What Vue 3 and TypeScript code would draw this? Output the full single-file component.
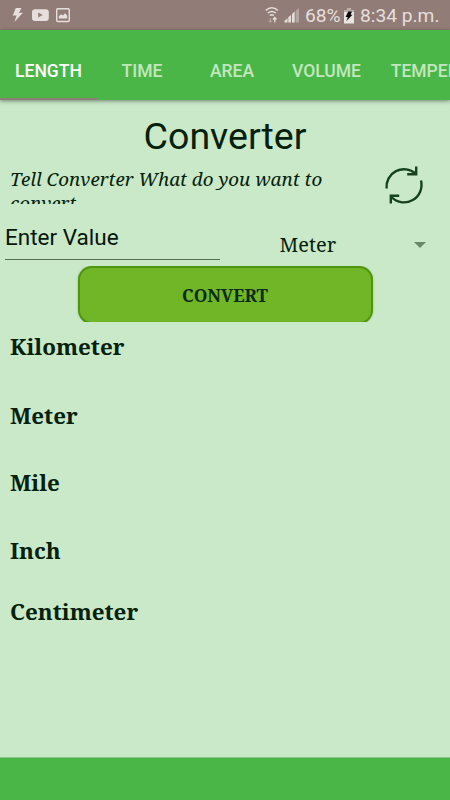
<script setup lang="ts">
import { ref } from 'vue'

interface Tab {
  name: string
  width: number
}

const tabs: Tab[] = [
  { name: 'LENGTH', width: 97 },
  { name: 'TIME', width: 90 },
  { name: 'AREA', width: 90 },
  { name: 'VOLUME', width: 99 },
  { name: 'TEMPERATURE', width: 151 },
]
const active = ref('LENGTH')
const units = [
  { name: 'Kilometer', height: 69 },
  { name: 'Meter', height: 67 },
  { name: 'Mile', height: 68 },
  { name: 'Inch', height: 61 },
  { name: 'Centimeter', height: 60 },
]
</script>

<template>
  <div class="screen">
    <header class="status">
      <svg class="notices" width="80" height="30" viewBox="0 0 80 30">
        <path d="M15.8 8h5.7l-2.6 4.7h4L14.4 22l2.2-6.6h-3.8z" fill="#e6dfdd" />
        <rect x="32" y="9.2" width="16.8" height="11.8" rx="3" fill="#e6dfdd" />
        <path d="M38.2 12.4v5l4.6-2.5z" fill="#927c77" />
        <rect x="56.7" y="8.7" width="12.6" height="12.8" rx="1" fill="none" stroke="#e6dfdd" stroke-width="1.4" />
        <path d="M58.8 18.5v-2.3l2.3-2 1.8 1.4 2-2.3 2.3 2.3v2.9z" fill="#e6dfdd" />
      </svg>
      <svg class="signals" width="36" height="30" viewBox="0 0 36 30">
        <g fill="none" stroke="#e6dfdd" stroke-width="1.5">
          <path d="M.8 10.3q6-5 12 0M2.8 13q4-3.2 8 0M4.8 15.5q2-1.5 4 0" />
        </g>
        <path d="M5.3 18v4.5M3.6 20.5l1.7 2 1.7-2" stroke="#b9aaa6" fill="none" />
        <path d="M9.8 22.5v-5M8.1 19.5l1.7-2 1.7 2" stroke="#e6dfdd" stroke-width="1.3" fill="none" />
        <path d="M19.5 22.5v-1.8l3-2.5v4.3zM23.3 22.5v-5.2l2.7-2.4v7.6zM27 22.5v-8.6l2.7-2.4v11z" fill="#e6dfdd" />
        <path d="M30.6 22.5V10.9L34 8v14.5z" fill="#b5a5a1" />
      </svg>
      <span class="percent">68%</span>
      <svg class="battery" width="12" height="16" viewBox="0 0 12 16">
        <path d="M4 .5h4V2h3v13.5H1V2h3z" fill="#e9e3e1" />
        <path d="M1 2h3V.5h4V2h3v2H1z" fill="#bbaca8" />
        <path d="M5.2 3.5h3.7L7.7 6.8h1.8L3.4 13l1.4-4H2.6z" fill="#080808" />
      </svg>
      <span class="clock">8:34 p.m.</span>
    </header>

    <nav class="tabs">
      <button
        v-for="tab in tabs"
        :key="tab.name"
        class="tab"
        :class="{ active: active === tab.name }"
        :style="{ width: tab.width + 'px' }"
        @click="active = tab.name"
      >{{ tab.name }}</button>
    </nav>

    <main class="content">
      <h1>Converter</h1>
      <section class="intro">
        <p>Tell Converter What do you want to<br />convert</p>
        <svg class="refresh" width="42" height="42" viewBox="0 0 42 42">
          <g fill="none" stroke="#174220" stroke-width="2.4">
            <path d="M3.6 24.5A17.5 17.5 0 0 1 32.5 9.5" />
            <path d="M33.2 2.5v7.7h-9" />
            <path d="M38 16.5A17.5 17.5 0 0 1 8 32.5" />
            <path d="M7.8 39.5v-7.7h8.4" />
          </g>
        </svg>
      </section>
      <section class="inputs">
        <div class="field">Enter Value</div>
        <div class="select">
          <span class="selected">Meter</span>
          <svg width="12" height="6" viewBox="0 0 12 6"><path d="M0 0h12L6 6z" fill="#688969" /></svg>
        </div>
      </section>
      <div class="action"><button class="convert">CONVERT</button></div>
      <ul class="results">
        <li v-for="unit in units" :key="unit.name" :style="{ height: unit.height + 'px' }">{{ unit.name }}</li>
      </ul>
    </main>
    <footer class="bottom"></footer>
  </div>
</template>

<style>
body {
  margin: 0;
}
</style>

<style scoped>
.screen {
  width: 450px;
  height: 800px;
  overflow: hidden;
  display: flex;
  flex-direction: column;
  background: #cae9c9;
  color: #06210b;
  font-family: Roboto, sans-serif;
}
.status {
  flex: none;
  height: 30px;
  display: flex;
  align-items: center;
  background: #927c77;
  color: #e6dfdd;
  font-size: 19.2px;
  line-height: 30px;
  white-space: nowrap;
}
.notices,
.signals,
.battery {
  flex: none;
  display: block;
}
.signals {
  margin-left: 185px;
}
.percent {
  width: 38px;
  margin-left: 4px;
  padding-top: 2px;
}
.battery {
  margin: 1px 5px 0 0;
}
.clock {
  padding-top: 2px;
}
.tabs {
  flex: none;
  height: 70px;
  display: flex;
  background: #4ab647;
  box-shadow: 0 1px 4px rgba(0, 0, 0, 0.45);
}
.tab {
  flex: none;
  box-sizing: border-box;
  border: 0;
  border-bottom: 2px solid transparent;
  padding: 14px 0 0;
  background: none;
  color: #c3e6bf;
  font: 500 17.5px Roboto, sans-serif;
  text-align: center;
}
.tab.active {
  color: #fff;
  border-color: #927c77;
}
.content {
  flex: 1;
  min-height: 0;
}
h1 {
  margin: 0;
  padding-top: 13px;
  height: 47px;
  font-size: 37.5px;
  line-height: 46px;
  font-weight: 400;
  text-align: center;
}
.intro {
  height: 44px;
  display: flex;
  justify-content: space-between;
}
.intro p {
  margin: 7px 0 0 10px;
  height: 37px;
  overflow: hidden;
  white-space: nowrap;
  font: italic 18.8px/24px "Noto Serif", "DejaVu Serif Condensed", "DejaVu Serif", serif;
}
.refresh {
  flex: none;
  margin: 4px 25px 0 0;
}
.inputs {
  height: 62px;
  display: flex;
}
.field {
  box-sizing: border-box;
  width: 215px;
  height: 56px;
  margin-left: 5px;
  padding-top: 19px;
  border-bottom: 1px solid #55704f;
  font-size: 22.5px;
  line-height: 28px;
  color: #06160a;
}
.select {
  flex: 1;
  display: flex;
  align-items: center;
  padding: 20px 24px 0 59.5px;
  justify-content: space-between;
}
.selected {
  font: 20px/28px "Noto Serif", "DejaVu Serif Condensed", "DejaVu Serif", serif;
}
.action {
  height: 56px;
  overflow: hidden;
  display: flex;
  justify-content: center;
}
.convert {
  box-sizing: border-box;
  width: 295px;
  height: 58px;
  border: 2px solid #4f960f;
  border-radius: 14px;
  background: #70b626;
  color: #0c2b18;
  box-shadow: 0 0 2px rgba(40, 90, 20, 0.4);
  font: bold 17.4px "Noto Serif", "DejaVu Serif Condensed", "DejaVu Serif", serif;
}
.results {
  margin: 0;
  padding: 9px 0 0 10px;
  list-style: none;
  font: bold 22.4px/32px "Noto Serif", "DejaVu Serif Condensed", "DejaVu Serif", serif;
}
.bottom {
  flex: none;
  height: 43px;
  box-sizing: border-box;
  border-top: 1px solid #8bc989;
  background: #4ab647;
}
</style>
